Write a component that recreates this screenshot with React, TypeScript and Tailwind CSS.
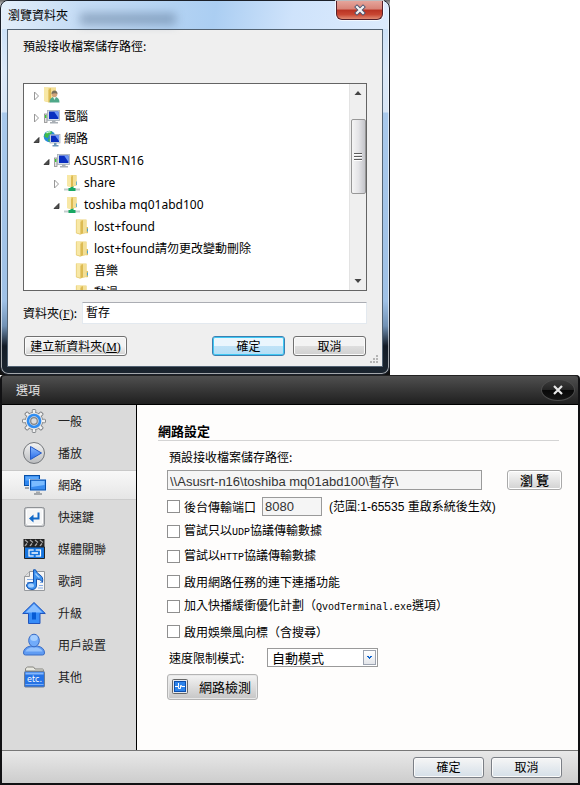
import { useState } from "react"
import type { ReactNode } from "react"

type TreeItem = {
  label: ReactNode
  icon: () => ReactNode
  pad: string
  state?: "open" | "closed"
}

const tree: TreeItem[] = [
  { label: "", icon: UserFolderIcon, pad: "pl-2", state: "closed" },
  { label: "電腦", icon: ComputerIcon, pad: "pl-2", state: "closed" },
  { label: "網路", icon: NetworkIcon, pad: "pl-2", state: "open" },
  { label: "ASUSRT-N16", icon: ComputerIcon, pad: "pl-[18px]", state: "open" },
  { label: "share", icon: SharedFolderIcon, pad: "pl-7", state: "closed" },
  { label: "toshiba mq01abd100", icon: SharedFolderIcon, pad: "pl-7", state: "open" },
  { label: "lost+found", icon: FolderIcon, pad: "pl-[38px]" },
  { label: "lost+found請勿更改變動刪除", icon: FolderIcon, pad: "pl-[38px]" },
  { label: "音樂", icon: FolderIcon, pad: "pl-[38px]" },
  { label: "動漫", icon: FolderIcon, pad: "pl-[38px]" },
]

const sections = [
  { label: "一般", icon: GearIcon },
  { label: "播放", icon: PlayIcon },
  { label: "網路", icon: ScreensIcon },
  { label: "快速鍵", icon: KeyIcon },
  { label: "媒體關聯", icon: ClapperIcon },
  { label: "歌詞", icon: LyricsIcon },
  { label: "升級", icon: UpgradeIcon },
  { label: "用戶設置", icon: UserIcon },
  { label: "其他", icon: EtcIcon },
]

const options = [
  { id: "udp", label: <>嘗試只以<Mono>UDP</Mono>協議傳輸數據</> },
  { id: "http", label: <>嘗試以<Mono>HTTP</Mono>協議傳輸數據</> },
  { id: "continuous", label: "啟用網路任務的連下連播功能" },
  { id: "buffer", label: <>加入快播緩衝優化計劃（<Mono>QvodTerminal.exe</Mono>選項）</> },
  { id: "vane", label: "啟用娛樂風向標（含搜尋）" },
]

export default function App() {
  return (
    <main className="min-h-screen bg-white font-['Noto_Sans_CJK_TC',sans-serif] text-[12px] leading-4 text-black">
      <BrowseDialog />
      <OptionsDialog />
    </main>
  )
}

function BrowseDialog() {
  return (
    <section className="w-full max-w-[390px] bg-[linear-gradient(#666,#fff_2%,#fff_90%,#111_98%)]">
      <div className="relative rounded-lg border border-[#1b2029] bg-[linear-gradient(#c3dbf3_0px,#cde2f8_28px,#dbe8f8_70px,#d8e6f6_111px,#a9c9ec_112px,#9fc1e6_300px,#7191b4_325px,#141c27_345px,#1c2630_375px)] px-[6px] pb-[7px] shadow-[inset_0_0_0_1px_rgba(255,255,255,0.6)]">
        <header className="-mx-[5px] flex h-7 items-start justify-between rounded-t-md bg-[linear-gradient(100deg,#e4effa,#c5dcf5_20%,#abcef2_55%,#cfe3fb_75%,#dcebfd)] pr-[5px] pl-[6px]">
          <h1 className="flex h-7 items-center">瀏覽資料夾</h1>
          <span className="mt-3 mr-auto ml-3 h-3 w-24 bg-[#5d7795] opacity-50 blur-[5px]" />
          <button
            aria-label="Close"
            className="flex h-[19px] w-[47px] items-center justify-center rounded-b-md border border-t-0 border-[#54202a] bg-[linear-gradient(#e5a59b,#d88377_45%,#b93323_50%,#c84632_75%,#e08a72)] shadow-[0_0_0_1px_rgba(255,255,255,0.7)]"
          >
            <svg viewBox="0 0 14 12" className="h-3 w-[14px]">
              <path d="M4 3 10 9M10 3 4 9" stroke="#4d5570" strokeWidth="4" strokeLinecap="square" />
              <path d="M4 3 10 9M10 3 4 9" stroke="#f4f4f4" strokeWidth="2.200" strokeLinecap="square" />
            </svg>
          </button>
        </header>

        <div className="border border-[#526272] bg-[#efefef] px-[15px] pt-2 pb-[10px]">
          <p>預設接收檔案儲存路徑:</p>

          <div className="mt-[29px] flex h-[208px] overflow-hidden border border-[#646464] bg-white">
            <ul className="flex-1 font-['Noto_Sans','Noto_Sans_CJK_TC',sans-serif]">
              {tree.map((item, index) => (
                <li key={index} className={`flex h-[22px] items-center ${item.pad}`}>
                  <span className="flex w-3 justify-start">{item.state && <Arrow open={item.state === "open"} />}</span>
                  <span className="h-4 w-4 shrink-0">
                    <item.icon />
                  </span>
                  <span className="ml-1 leading-4 whitespace-nowrap">{item.label}</span>
                </li>
              ))}
            </ul>
            <ScrollBar />
          </div>

          <div className="mt-[11px] flex items-center">
            <label htmlFor="folder" className="w-[59px]">
              資料夾<span className="font-['Liberation_Serif']">(<u>F</u>)</span>:
            </label>
            <input
              id="folder"
              defaultValue="暫存"
              className="h-[22px] min-w-0 flex-1 border border-[#e3e9ef] border-t-[#abadb3] bg-white px-[3px] pb-1"
            />
          </div>

          <div className="mt-3 flex gap-2 px-px">
            <button className="mr-auto h-5 w-[103px] rounded-[3px] border border-[#707070] bg-linear-to-b from-[#f3f3f3] from-50% to-[#d2d2d2] leading-4 shadow-[inset_0_0_0_1px_#fbfbfb]">
              建立新資料夾<span className="font-['Liberation_Serif']">(<u>M</u>)</span>
            </button>
            <button className="h-5 w-[73px] rounded-[3px] border border-[#3c7fb1] bg-[linear-gradient(#eaf6fd_50%,#bfe3f7_50%,#b5def5)] leading-4 shadow-[inset_0_0_0_1px_#3fc8f3]">
              確定
            </button>
            <button className="h-5 w-[73px] rounded-[3px] border border-[#707070] bg-[linear-gradient(#f3f3f3_50%,#dedede_50%,#d0d0d0)] leading-4 shadow-[inset_0_0_0_1px_#fbfbfb]">
              取消
            </button>
          </div>
        </div>

        <svg viewBox="0 0 12 12" className="absolute right-[9px] bottom-[9px] h-3 w-3" fill="#b5b5b5">
          <path d="M8 2h2v2H8zM8 5h2v2H8zM5 5h2v2H5zM8 8h2v2H8zM5 8h2v2H5zM2 8h2v2H2z" />
        </svg>
      </div>
    </section>
  )
}

function ScrollBar() {
  return (
    <div className="flex w-[17px] flex-col items-center border-l border-[#e3e3e3] bg-[#efefef]">
      <svg viewBox="0 0 8 5" className="mt-[6px] h-[5px] w-2" fill="#444">
        <path d="M.5 5 4 1l3.500 4z" />
      </svg>
      <div className="mt-6 flex h-[75px] w-[15px] flex-col items-center justify-center gap-px rounded-[2px] border border-[#979797] bg-linear-to-r from-[#f5f5f5] via-[#e4e4e7] to-[#c4c5ca]">
        <span className="h-[2px] w-2 border-t border-[#5c5c5c] bg-white" />
        <span className="h-[2px] w-2 border-t border-[#5c5c5c] bg-white" />
        <span className="h-[2px] w-2 border-t border-[#5c5c5c] bg-white" />
      </div>
      <svg viewBox="0 0 8 5" className="mt-auto mb-[6px] h-[5px] w-2" fill="#444">
        <path d="M.5 0h7L4 4z" />
      </svg>
    </div>
  )
}

function OptionsDialog() {
  const [active, setActive] = useState(2)

  return (
    <section className="w-full rounded-t-[4px] border-x-2 border-b-[3px] border-[#111113] bg-[#111113]">
      <header className="flex h-[30px] items-center justify-between rounded-t-[3px] border-t border-b border-t-[#222] border-b-black bg-linear-to-b from-[#505050] to-[#202020] pr-[3px] pl-[14px]">
        <h1 className="text-[#e6e6e6]">選項</h1>
        <button
          aria-label="Close"
          className="flex h-[22px] w-[34px] items-center justify-center rounded-[50%] border border-[#4b4b4b] bg-[linear-gradient(#3c3c3c,#252525_48%,#080808_52%,#151515)]"
        >
          <svg viewBox="0 0 10 10" className="h-[10px] w-[10px]">
            <path d="M1 1l8 8M9 1l-8 8" stroke="#e8e8e8" strokeWidth="2.200" />
          </svg>
        </button>
      </header>

      <div className="flex">
        <nav className="w-[135px] shrink-0 border-r border-black bg-[#dadada]">
          <ul>
            {sections.map((section, index) => (
              <li key={section.label} className="flex h-8 items-center">
                <button
                  onClick={() => setActive(index)}
                  className={`flex h-[30px] w-full items-center border-y pl-5 text-left text-[#222] ${
                    active === index
                      ? "border-t-[#c8c8c8] border-b-[#cdcdcd] bg-linear-to-b from-[#f8f8f8] to-[#e6e6e6]"
                      : "border-transparent"
                  }`}
                >
                  <span className="h-6 w-6">
                    <section.icon />
                  </span>
                  <span className="ml-3">{section.label}</span>
                </button>
              </li>
            ))}
          </ul>
        </nav>

        <form className="min-w-0 flex-1 bg-[#fefdfc] pt-[18px] pr-4 pb-[50px] pl-[21px]" onSubmit={(e) => e.preventDefault()}>
          <h2 className="mr-[3px] border-b border-[#d4d4d4] pb-px text-[13px] leading-4 font-bold">網路設定</h2>

          <div className="pl-[9px]">
            <label htmlFor="path" className="mt-2 block pl-[2px]">
              預設接收檔案儲存路徑:
            </label>
            <div className="mt-[5px] flex gap-[25px]">
              <input
                id="path"
                defaultValue={"\\\\Asusrt-n16\\toshiba mq01abd100\\暫存\\"}
                className="h-5 min-w-0 flex-1 border border-[#9a9a9a] bg-[#f5f5f5] px-[2px] font-['Liberation_Sans','Noto_Sans_CJK_TC',sans-serif] text-[13px] text-[#333]"
              />
              <button className="h-5 w-[55px] rounded-[3px] border border-[#aaa] bg-linear-to-b from-[#f8f8f8] to-[#d2d2d2] text-[13px] leading-4 font-medium shadow-[inset_0_0_0_1px_#fff]">
                瀏 覽
              </button>
            </div>

            <div className="mt-1 flex h-[25px] items-center">
              <CheckBox id="port-on" />
              <label htmlFor="port-on" className="w-[78px]">
                後台傳輸端口
              </label>
              <input
                aria-label="後台傳輸端口"
                defaultValue="8080"
                className="h-[19px] w-[60px] border border-[#9a9a9a] bg-[#f5f5f5] px-[2px] font-['Liberation_Sans'] text-[13px] text-[#333]"
              />
              <span className="ml-[7px] font-['Liberation_Sans','Noto_Sans_CJK_TC',sans-serif] whitespace-nowrap">
                (范圍:1-65535 重啟系統後生效)
              </span>
            </div>

            {options.map((option) => (
              <div key={option.id} className="flex h-[25px] items-center">
                <CheckBox id={option.id} />
                <label htmlFor={option.id} className="whitespace-nowrap">
                  {option.label}
                </label>
              </div>
            ))}

            <div className="mt-1 flex items-center">
              <label htmlFor="limit" className="w-[100px] pl-[2px]">
                速度限制模式:
              </label>
              <div className="relative">
                <select
                  id="limit"
                  className="h-[19px] w-[111px] appearance-none border border-[#9a9a9a] bg-white pr-4 pl-1 text-[13px] leading-4"
                >
                  <option>自動模式</option>
                </select>
                <span className="pointer-events-none absolute top-[2px] right-[2px] flex h-[15px] w-[13px] items-center justify-center border border-[#9ca3b0] bg-linear-to-b from-white to-[#e4e6ea]">
                  <svg viewBox="0 0 5 3" className="h-[3px] w-[5px]" fill="#0b62d0">
                    <path d="M0 0h2v1h1V0h2v1H4v1H3v1H2V2H1V1H0z" />
                  </svg>
                </span>
              </div>
            </div>

            <button className="mt-[7px] flex h-[26px] w-[91px] items-center justify-between rounded-[3px] border border-[#b4b4b4] bg-linear-to-b from-[#f4f4f4] to-[#c6c6c6] pr-[6px] pl-1 text-[13px] leading-4 shadow-[inset_0_0_0_1px_#e8e8e8]">
              <svg viewBox="0 0 16 16" className="h-4 w-4">
                <rect x="0.500" y="0.500" width="15" height="14" rx="1" fill="#e4e8ee" stroke="#666" />
                <rect x="2.500" y="2.500" width="11" height="10" fill="#2d83ea" stroke="#0c4eab" />
                <path d="M3 7.500h3.500V4M6.500 7.500v2h2v-3h1v1H13" fill="none" stroke="#fff" />
              </svg>
              網路檢測
            </button>
          </div>
        </form>
      </div>

      <footer className="flex h-[33px] items-center justify-end gap-[7px] border-t border-[#777] bg-linear-to-b from-[#e8e8e8] to-[#cdcdcd] pr-4">
        <button className="h-[21px] w-[71px] rounded-[3px] border border-[#7b7f86] bg-linear-to-b from-[#f6f6f6] to-[#d5dfe8] leading-4 shadow-[inset_0_0_0_1px_#fafafa]">
          確定
        </button>
        <button className="h-[21px] w-[71px] rounded-[3px] border border-[#7b7f86] bg-linear-to-b from-[#f6f6f6] to-[#d5dfe8] leading-4 shadow-[inset_0_0_0_1px_#fafafa]">
          取消
        </button>
      </footer>
    </section>
  )
}

function CheckBox({ id }: { id: string }) {
  return (
    <input
      id={id}
      type="checkbox"
      className="mr-1 h-[13px] w-[13px] shrink-0 appearance-none border border-[#8f8f8f] bg-white checked:bg-[#2d83ea]"
    />
  )
}

function Mono({ children }: { children: ReactNode }) {
  return <span className="font-['Liberation_Mono'] text-[10px]">{children}</span>
}

function Arrow({ open }: { open: boolean }) {
  return (
    <svg viewBox="0 0 9 9" className="h-[9px] w-[9px]">
      {open ? (
        <path d="M7 2.500v5H2z" fill="#505050" stroke="#262626" strokeWidth="0.800" />
      ) : (
        <path d="M2.500 1 6.500 5l-4 4z" fill="#fff" stroke="#989898" />
      )}
    </svg>
  )
}

/* Tree icons, 16px */

function FolderIcon() {
  return (
    <svg viewBox="0 0 16 16" className="h-4 w-4">
      <path d="M2 .5h10.500v13.500L6 15.500 2 14z" fill="#ecd27a" />
      <path d="M2 .5h4.500V15L2 14z" fill="#f8e8a6" />
      <path d="M6.500 3 9 1v13l-2.500 1.500z" fill="#dcba52" />
      <path d="M9 1h3.500v12.500L9 14z" fill="#f3df96" />
      <path d="M12.500 8H14v6l-1.500.5z" fill="#e0c060" />
      <path d="M13.500 9.500v3" stroke="#4aa3d0" />
      <path d="M2.300 .8v13.200l4 1.200" fill="none" stroke="#e0c568" strokeWidth="0.600" />
    </svg>
  )
}

function SharedFolderIcon() {
  return (
    <svg viewBox="0 0 16 16" className="h-4 w-4">
      <path d="M0 13.500h16v2H0z" fill="#c3cccd" />
      <path d="M6.500 11h3v2h2v3h-7v-3h2z" fill="#18a862" />
      <path d="M3 0h9.500v10.500L7 12l-4-1z" fill="#ecd27a" />
      <path d="M3 0h4v12l-4-1z" fill="#f8e8a6" />
      <path d="M7 2 9 .5v10.500l-2 1z" fill="#dcba52" />
      <path d="M9 .5h3.500v10L9 11z" fill="#f3df96" />
      <path d="M12.500 6.500v3.500" stroke="#4aa3d0" strokeWidth="0.800" />
    </svg>
  )
}

function ComputerIcon() {
  return (
    <svg viewBox="0 0 16 16" className="h-4 w-4">
      <rect x="0.500" y="5" width="2.500" height="8.500" fill="#e2e2e2" stroke="#8d8d8d" strokeWidth="0.800" />
      <path d="M1.700 6v3" stroke="#3dcb33" strokeWidth="1.400" />
      <rect x="3.500" y="1.500" width="12" height="10" fill="#d6dde4" stroke="#a4adb6" strokeWidth="0.800" />
      <rect x="5" y="2.500" width="9.500" height="7.500" fill="#0a2fc0" />
      <path d="M10 2.500h4.500v6.500z" fill="#6d97f5" />
      <path d="M8 11.500h3.500V13H14v1.500H6V13h2z" fill="#a9afb5" />
    </svg>
  )
}

function NetworkIcon() {
  return (
    <svg viewBox="0 0 16 16" className="h-4 w-4 overflow-visible">
      <circle cx="5.500" cy="5.500" r="5.800" fill="#268bdc" />
      <path d="M1.500 2Q5-1.500 8.500 1L7 3 5 4 4 7 .5 6Q0 3.500 1.500 2zM4.500 7.500l3 1L6.500 11 4 10z" fill="#3fbc4c" />
      <path d="M2.500 2q2-1.800 4-.8" fill="none" stroke="#d6f7e8" strokeWidth="1.400" />
      <rect x="6" y="3.500" width="10" height="8.500" fill="#dfe6ee" stroke="#8b98a8" strokeWidth="0.600" />
      <rect x="7" y="4.500" width="8" height="6.500" fill="#0a2fc0" />
      <path d="M11 4.500h4v5.500z" fill="#6d97f5" />
      <path d="M10 12h2.500v2h2v1.500h-6V14H10z" fill="#6d96b8" />
    </svg>
  )
}

function UserFolderIcon() {
  return (
    <svg viewBox="0 0 16 16" className="h-4 w-4">
      <path d="M0 .5h12v13.500L5 15.500 0 14z" fill="#ecd27a" />
      <path d="M0 .5h4.500V15L0 14z" fill="#f8e8a6" />
      <path d="M4.500 3 7 1v13l-2.500 1.500z" fill="#dcba52" />
      <path d="M7 1h5v12.500L7 14z" fill="#f3df96" />
      <path d="M5.500 15.500Q5.500 10 10.500 10t5 5.500z" fill="#4fa889" />
      <path d="M9 10h3l-1.500 3z" fill="#e8f3ee" />
      <circle cx="10.500" cy="7.300" r="2.800" fill="#d0a57c" />
      <path d="M7.500 7q0-3.600 3-3.600t3 3.600q-2-1.500-6 0z" fill="#77705c" />
    </svg>
  )
}

/* Sidebar icons, 24px */

function GearIcon() {
  return (
    <svg viewBox="0 0 24 24" className="h-6 w-6">
      <g fill="#f0f0f0" stroke="#7d8084">
        {[0, 45, 90, 135].map((angle) => (
          <rect key={angle} x="10.300" y="0.600" width="3.400" height="22.800" rx="0.600" transform={`rotate(${angle} 12 12)`} />
        ))}
        <circle cx="12" cy="12" r="8.600" />
      </g>
      {[0, 45, 90, 135].map((angle) => (
        <rect key={angle} x="10.800" y="1.200" width="2.400" height="21.600" fill="#f0f0f0" transform={`rotate(${angle} 12 12)`} />
      ))}
      <circle cx="12" cy="12" r="8" fill="#e6e6e6" />
      <circle cx="12" cy="12" r="6" fill="#dcdcdc" stroke="#2f8df2" strokeWidth="2.600" />
      <circle cx="12" cy="12" r="3.300" fill="#dadada" stroke="#808387" strokeWidth="1.200" />
    </svg>
  )
}

function PlayIcon() {
  return (
    <svg viewBox="0 0 24 24" className="h-6 w-6">
      <defs>
        <linearGradient id="disc" x2="0" y2="1">
          <stop stopColor="#f5f5f5" />
          <stop offset="1" stopColor="#b9bbbe" />
        </linearGradient>
        <linearGradient id="play" x2="0" y2="1">
          <stop stopColor="#8ebdff" />
          <stop offset="1" stopColor="#2569e8" />
        </linearGradient>
      </defs>
      <circle cx="12" cy="12" r="10.500" fill="url(#disc)" stroke="#74777b" />
      <path d="M8.500 5.500v13L19.500 12z" fill="url(#play)" stroke="#2459c5" strokeLinejoin="round" />
    </svg>
  )
}

function ScreensIcon() {
  return (
    <svg viewBox="0 0 24 24" className="h-6 w-6 overflow-visible">
      <path d="M3 14h5v2H3z" fill="#a3a7ab" />
      <rect x="2.500" y="2.500" width="15" height="10" fill="#2e86ee" stroke="#0850a8" />
      <path d="M3.500 3.500h13v4h-13z" fill="#5da8fa" />
      <rect x="7" y="6" width="18" height="12" fill="#e4efff" />
      <rect x="8.500" y="7" width="15" height="10" fill="#3a8df0" stroke="#0850a8" />
      <path d="M9.500 8h13v4l-13 2z" fill="#7bbcff" />
      <path d="M14 18.500h4V20h2v2h-8v-2h2z" fill="#a3a7ab" />
    </svg>
  )
}

function KeyIcon() {
  return (
    <svg viewBox="0 0 24 24" className="h-6 w-6">
      <rect x="2.500" y="2.500" width="20" height="19" rx="2" fill="#c9cbce" stroke="#8f9296" />
      <rect x="4.500" y="4" width="16" height="15.500" rx="1" fill="#f4f5f6" stroke="#fff" />
      <path d="M16.500 7.500v6H11" fill="none" stroke="#0f68c8" strokeWidth="2" />
      <path d="M7 13.500l4.500-4v8z" fill="#0f68c8" />
    </svg>
  )
}

function ClapperIcon() {
  return (
    <svg viewBox="0 0 24 24" className="h-6 w-6">
      <path d="M1.500 2h21v8h-21z" fill="#222" />
      <path d="M3 3l3 2.500M8 3l3 2.500M13 3l3 2.500M18 3l3 2.500M5 6.500L3 9M10 6.500L8 9M15 6.500L13 9M20 6.500L18 9" stroke="#a5a5a5" strokeWidth="1.300" />
      <path d="M2.500 10h20v11.500h-20z" fill="#1675df" stroke="#222" />
      <rect x="7" y="13" width="11.500" height="6" fill="none" stroke="#fff" strokeWidth="1.200" />
      <path d="M9.500 16h6.500" stroke="#fff" strokeWidth="1.500" />
      <path d="M12.700 12v2.500M12.700 17.500V20" stroke="#1675df" strokeWidth="2" />
    </svg>
  )
}

function LyricsIcon() {
  return (
    <svg viewBox="0 0 24 24" className="h-6 w-6">
      <path d="M7.500 2.500h15v19h-20v-14z" fill="#f6f6f6" stroke="#96999d" />
      <path d="M7.500 2.500v5h-5" fill="#ddd" stroke="#96999d" />
      <path d="M5 10.500h6M5 13.500h3M18 13.500h3M17 16.500h4M16 19h5" stroke="#85ace5" />
      <path d="M11.500.8h2q1 3.200 4.500 5.200t2.500 7q-2-3-6-3v6q0 4.500-4.500 4.500T4.500 17q0-3.500 4.500-3.500h2.500z" fill="#3f94f0" stroke="#1754af" />
      <ellipse cx="9" cy="16.500" rx="3" ry="2" fill="#a5d0ff" />
      <path d="M13.500 4.500q1.500 2.500 4 4" fill="none" stroke="#a5d0ff" strokeWidth="1.400" />
    </svg>
  )
}

function UpgradeIcon() {
  return (
    <svg viewBox="0 0 24 24" className="h-6 w-6">
      <path d="M12 1.500 23.300 12.500H18v10H6.500v-10H.7z" fill="#368cf8" stroke="#2054bd" />
      <path d="M12 3 20.500 11.500h-17z" fill="#8abfff" />
      <path d="M10 11.500h4v7h-4z" fill="#075bd4" />
    </svg>
  )
}

function UserIcon() {
  return (
    <svg viewBox="0 0 24 24" className="h-6 w-6">
      <path d="M1.500 20q0-5.500 7-7h7q7 1.500 7 7 0 2-2 2h-17q-2 0-2-2z" fill="#609cf3" stroke="#396cc5" />
      <path d="M3.500 18.500q1-3 5.500-4h6q4.500 1 5.500 4z" fill="#94c1fc" />
      <ellipse cx="12" cy="7.500" rx="5.300" ry="6.300" fill="#71abfa" stroke="#396cc5" />
      <ellipse cx="12" cy="5" rx="3.700" ry="3" fill="#a6cfff" />
    </svg>
  )
}

function EtcIcon() {
  return (
    <svg viewBox="0 0 24 24" className="h-6 w-6">
      <path d="M3.500 6V3.500l2-1.500h6l1.500 2h7.500q1 0 1 2z" fill="#e8e8e0" stroke="#85857f" />
      <rect x="2.500" y="6.500" width="20" height="15.500" rx="1" fill="#2673e5" stroke="#6c7c93" />
      <path d="M3.500 7.500h18v2h-18z" fill="#86b8fb" />
      <text x="12.500" y="16.500" textAnchor="middle" fontSize="8" fill="#fff" fontFamily="DejaVu Sans">
        etc.
      </text>
      <path d="M3.500 19.500h18" stroke="#79adf6" />
    </svg>
  )
}
